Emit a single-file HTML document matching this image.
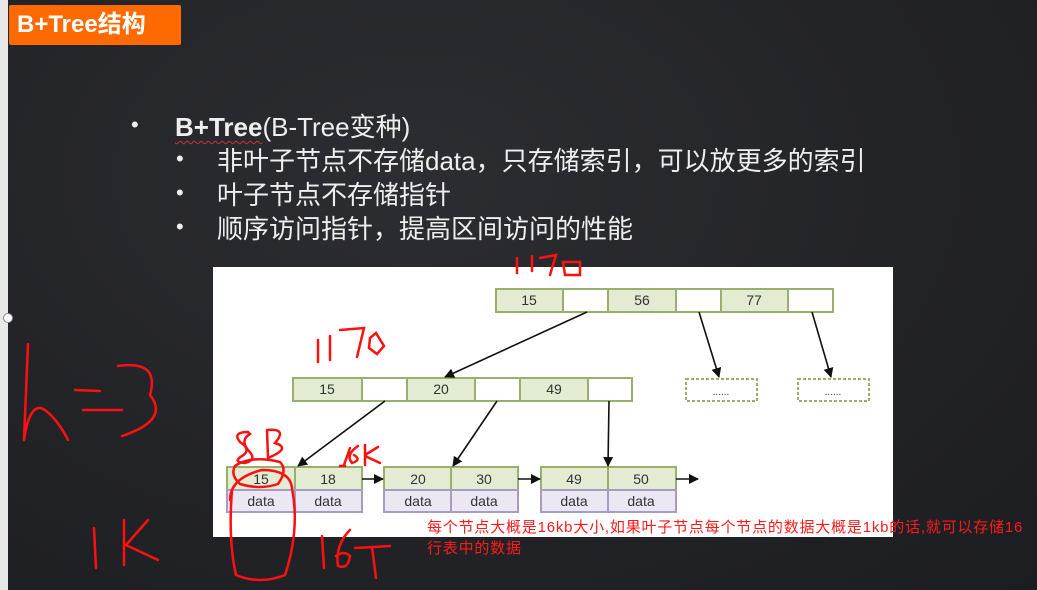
<!DOCTYPE html>
<html><head><meta charset="utf-8"><style>
body{margin:0;width:1037px;height:590px;overflow:hidden;background:#26272b;position:relative;font-family:"Liberation Sans","Noto Sans CJK SC",sans-serif}
#bg{position:absolute;left:0;top:0;width:1037px;height:590px;background:radial-gradient(ellipse at 40% 30%,#2c2d32 0%,#222327 60%,#1c1d20 100%)}
#strip{position:absolute;left:0;top:0;width:8px;height:590px;background:#e8e8e8}
#title{position:absolute;left:9px;top:5px;width:172px;height:40px;background:#ff6a00;border-radius:2px;color:#fff;font-weight:bold;font-size:24px;line-height:40px;padding-left:8px;box-sizing:border-box}
.t{position:absolute;color:#eee;font-size:26px;white-space:nowrap}
.b{position:absolute;color:#eee;font-size:22px}
#box{position:absolute;left:213px;top:267px;width:680px;height:270px;background:#fff}
#note{position:absolute;left:427px;top:517px;color:#ff1a1a;font-size:15px;line-height:21px;letter-spacing:0.8px;white-space:nowrap}
</style></head><body>
<div id="bg"></div><div id="strip"></div>
<div style="position:absolute;left:3px;top:313px;width:8px;height:8px;border-radius:50%;background:#fff;border:1px solid #888"></div>
<div id="title">B+Tree结构</div>
<div class="b" style="left:131px;top:112px">•</div>
<div class="t" style="left:175px;top:107px"><b style="text-decoration:underline wavy #c33;text-underline-offset:4px;text-decoration-thickness:1px">B+Tree</b>(B-Tree变种)</div>
<div class="b" style="left:176px;top:146px">•</div>
<div class="t" style="left:217px;top:141px">非叶子节点不存储data，只存储索引，可以放更多的索引</div>
<div class="b" style="left:176px;top:180px">•</div>
<div class="t" style="left:217px;top:175px">叶子节点不存储指针</div>
<div class="b" style="left:176px;top:214px">•</div>
<div class="t" style="left:217px;top:209px">顺序访问指针，提高区间访问的性能</div>
<div id="box"></div>
<svg style="position:absolute;left:0;top:0" width="1037" height="590" font-family="Liberation Sans,sans-serif" font-size="14">
<defs><marker id="a" markerWidth="10" markerHeight="10" refX="9" refY="5" orient="auto" markerUnits="userSpaceOnUse"><path d="M0,0L10,5L0,10z" fill="#111"/></marker></defs>
<g stroke="#9aae6e" stroke-width="2">
<rect x="496" y="289" width="337" height="23" fill="#fff"/>
<rect x="496" y="289" width="67" height="23" fill="#e3ebd3"/><rect x="608" y="289" width="68" height="23" fill="#e3ebd3"/><rect x="721" y="289" width="67" height="23" fill="#e3ebd3"/>
<line x1="563" y1="289" x2="563" y2="312"/><line x1="676" y1="289" x2="676" y2="312"/><line x1="788" y1="289" x2="788" y2="312"/>
<rect x="293" y="378" width="339" height="23" fill="#fff"/>
<rect x="293" y="378" width="69" height="23" fill="#e3ebd3"/><rect x="407" y="378" width="68" height="23" fill="#e3ebd3"/><rect x="520" y="378" width="68" height="23" fill="#e3ebd3"/>
<line x1="362" y1="378" x2="362" y2="401"/><line x1="475" y1="378" x2="475" y2="401"/><line x1="588" y1="378" x2="588" y2="401"/>
<rect x="686" y="379" width="71" height="22" fill="#fff" stroke-dasharray="3,2"/>
<rect x="798" y="379" width="71" height="22" fill="#fff" stroke-dasharray="3,2"/>
<rect x="227" y="467" width="135" height="23" fill="#e3ebd3"/><line x1="295" y1="467" x2="295" y2="490"/>
<rect x="384" y="467" width="134" height="23" fill="#e3ebd3"/><line x1="451" y1="467" x2="451" y2="490"/>
<rect x="541" y="467" width="135" height="23" fill="#e3ebd3"/><line x1="608" y1="467" x2="608" y2="490"/>
</g>
<g stroke="#a89cc0" stroke-width="2" fill="#ebe7f3">
<rect x="227" y="490" width="135" height="22"/><line x1="295" y1="490" x2="295" y2="512"/>
<rect x="384" y="490" width="134" height="22"/><line x1="451" y1="490" x2="451" y2="512"/>
<rect x="541" y="490" width="135" height="22"/><line x1="608" y1="490" x2="608" y2="512"/>
</g>
<g fill="#333" text-anchor="middle">
<text x="529" y="305">15</text><text x="642" y="305">56</text><text x="754" y="305">77</text>
<text x="327" y="394">15</text><text x="441" y="394">20</text><text x="554" y="394">49</text>
<text x="721" y="395" font-size="10">......</text><text x="833" y="395" font-size="10">......</text>
<text x="261" y="484">15</text><text x="328" y="484">18</text><text x="418" y="484">20</text><text x="484" y="484">30</text><text x="574" y="484">49</text><text x="641" y="484">50</text>
<text x="261" y="506">data</text><text x="328" y="506">data</text><text x="418" y="506">data</text><text x="484" y="506">data</text><text x="574" y="506">data</text><text x="641" y="506">data</text>
</g>
<g stroke="#111" stroke-width="1.6" marker-end="url(#a)">
<line x1="587" y1="312" x2="445" y2="377"/><line x1="699" y1="312" x2="719" y2="377"/><line x1="812" y1="312" x2="831" y2="377"/>
<line x1="385" y1="401" x2="298" y2="466"/><line x1="497" y1="401" x2="453" y2="466"/><line x1="609" y1="401" x2="608" y2="466"/>
<line x1="362" y1="479" x2="383" y2="479"/><line x1="518" y1="479" x2="540" y2="479"/><line x1="676" y1="479" x2="698" y2="479"/>
</g>
<g stroke="#ff1010" stroke-width="2.5" fill="none" stroke-linecap="round">
<path d="M517,258L517,273M532,256L532,271M540,258L556,255L550,275M563,262L580,262L580,275L565,275Z"/>
<path d="M318,340L318,362M330,336L330,360M340,330L364,328L357,357M370,338L376,333L384,346L377,354L369,348Z"/>
<path d="M28,344L24,440M24,440Q30,400 45,410Q58,420 68,440M75,390L100,391M83,410L122,410M118,366Q160,360 150,395Q170,420 122,436"/>
<path d="M248,432Q232,432 240,442Q252,450 242,456Q232,462 245,463Q258,460 248,450Q240,440 250,434ZM267,430L268,458M267,430Q288,428 275,443Q292,448 268,458"/>
<path d="M350,448L344,465M358,446Q345,455 352,463Q362,460 354,455M365,445L365,465M365,455L378,447M365,456L380,463M340,466L345,466"/>
<path d="M235,466Q250,455 280,462Q288,470 278,484Q260,490 240,484Q230,475 235,466Z"/>
<path d="M232,490Q228,540 236,575Q260,585 285,575Q300,530 292,488Q290,470 262,470Q230,478 230,500"/>
<path d="M94,528L96,568M124,520L124,565M148,520L126,545L158,560"/>
<path d="M322,536L324,568M350,530Q335,545 338,566Q348,570 350,556Q344,550 336,556M355,548L390,546M372,547L376,578"/>
</g>
</svg>
<div id="note">每个节点大概是16kb大小,如果叶子节点每个节点的数据大概是1kb的话,就可以存储16<br>行表中的数据</div>
</body></html>
